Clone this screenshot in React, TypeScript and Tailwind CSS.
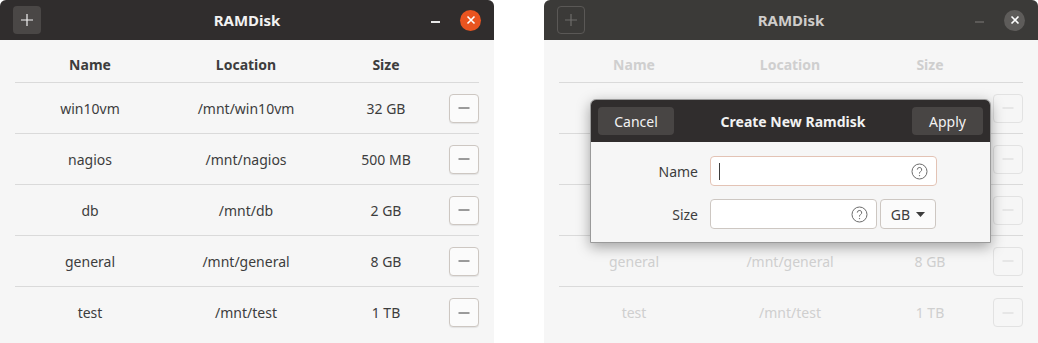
import React from "react";

const rows = [
  { name: "win10vm", loc: "/mnt/win10vm", size: "32 GB" },
  { name: "nagios", loc: "/mnt/nagios", size: "500 MB" },
  { name: "db", loc: "/mnt/db", size: "2 GB" },
  { name: "general", loc: "/mnt/general", size: "8 GB" },
  { name: "test", loc: "/mnt/test", size: "1 TB" },
];

function Help() {
  return (
    <svg width="17" height="17" viewBox="0 0 17 17" className="shrink-0">
      <circle cx="8.5" cy="8.5" r="7.5" fill="none" stroke="#6b6b6b" strokeWidth="1" />
      <path d="M6.3 6.6a2.2 2.2 0 1 1 3.2 2c-.7.4-1 .8-1 1.5v.5" fill="none" stroke="#6b6b6b" strokeWidth="1" />
      <circle cx="8.5" cy="12.6" r="0.7" fill="#6b6b6b" />
    </svg>
  );
}

function Window({ faded }: { faded: boolean }) {
  const text = faded ? "text-[#cfcfcf]" : "text-[#3d3d3d]";
  return (
    <div className="relative w-[494px] h-[343px] flex flex-col rounded-t-[6px] overflow-hidden bg-[#f6f6f6]">
      <div className={`h-[40px] grid grid-cols-[1fr_auto_1fr] items-center px-[13px] shrink-0 ${faded ? "bg-[#3b3a38]" : "bg-[#302d2d]"}`}>
        <div className="flex">
          <div className={`w-[28px] h-[28px] rounded-[4px] flex items-center justify-center ${faded ? "border border-[#5a5856] bg-[#3b3a38]" : "bg-[#4a4746]"}`}>
            <svg width="14" height="14" viewBox="0 0 14 14">
              <path d="M7 1v12M1 7h12" stroke={faded ? "#6f6d6b" : "#f2f2f2"} strokeWidth="1.2" />
            </svg>
          </div>
        </div>
        <div className={`text-center font-bold text-[15px] ${faded ? "text-[#cfcdcb]" : "text-[#f2f2f2]"}`}>RAMDisk</div>
        <div className="flex items-center justify-end">
          <div className="w-[28px] flex justify-center mr-[11px] mt-[4px]">
            <div className={`w-[9px] h-[1.5px] ${faded ? "bg-[#5c5a58]" : "bg-[#e8e8e8]"}`} />
          </div>
          <div className={`w-[21px] h-[21px] rounded-full flex items-center justify-center ${faded ? "bg-[#5e5c5a]" : "bg-[#e95420]"}`}>
            <svg width="10" height="10" viewBox="0 0 10 10">
              <path d="M1.5 1.5l7 7M8.5 1.5l-7 7" stroke="#ffffff" strokeWidth="1.6" />
            </svg>
          </div>
        </div>
      </div>
      <div className={`flex-1 px-[15px] ${text} text-[14px]`}>
        <div className="flex items-center h-[43px] pt-[7px] border-b border-[#dadada] font-bold">
          <div className="w-[150px] text-center">Name</div>
          <div className="w-[162px] text-center">Location</div>
          <div className="w-[118px] text-center">Size</div>
        </div>
        {rows.map((r, i) => (
          <div key={r.name} className={`flex items-center h-[51px] ${i < rows.length - 1 ? "border-b border-[#dadada]" : ""}`}>
            <div className="w-[150px] text-center">{r.name}</div>
            <div className="w-[162px] text-center">{r.loc}</div>
            <div className="w-[118px] text-center">{r.size}</div>
            <div className="flex-1 flex justify-end">
              <div className={`w-[30px] h-[29px] rounded-[4px] border flex items-center justify-center ${faded ? "border-[#e2e2e2] bg-[#f6f6f6]" : "border-[#cdc7c2] bg-[#fbfbfb] shadow-[0_1px_1px_rgba(0,0,0,0.08)]"}`}>
                <svg width="12" height="2" viewBox="0 0 12 2">
                  <path d="M0.5 1h11" stroke={faded ? "#d6d6d6" : "#3a3a3a"} strokeWidth="1" />
                </svg>
              </div>
            </div>
          </div>
        ))}
      </div>
      {faded && (
        <div className="absolute left-[46px] top-[99px] w-[401px] h-[144px] flex flex-col rounded-t-[6px] overflow-hidden border border-[#9a9a9a] bg-[#f6f6f6] shadow-[0_4px_14px_rgba(0,0,0,0.35)]">
          <div className="h-[42px] bg-[#302d2d] flex items-center px-[7px] shrink-0">
            <div className="w-[76px] h-[28px] rounded-[4px] bg-[#484544] text-[#f2f2f2] text-[14px] flex items-center justify-center">Cancel</div>
            <div className="flex-1 text-center font-bold text-[14px] text-[#f2f2f2]">Create New Ramdisk</div>
            <div className="w-[71px] h-[28px] rounded-[4px] bg-[#484544] text-[#f2f2f2] text-[14px] flex items-center justify-center">Apply</div>
          </div>
          <div className="flex-1 flex flex-col gap-[13px] pt-[14px] text-[14px] text-[#3d3d3d]">
            <div className="flex items-center">
              <div className="w-[119px] text-right pr-[12px]">Name</div>
              <div className="w-[227px] h-[30px] rounded-[4px] border border-[#e3c3b5] bg-white flex items-center px-[8px] justify-between">
                <div className="w-[1px] h-[17px] bg-[#3d3d3d]" />
                <Help />
              </div>
            </div>
            <div className="flex items-center">
              <div className="w-[119px] text-right pr-[12px]">Size</div>
              <div className="w-[167px] h-[30px] rounded-[4px] border border-[#cdc7c2] bg-white flex items-center px-[8px] justify-end">
                <Help />
              </div>
              <div className="ml-[3px] w-[56px] h-[30px] rounded-[4px] border border-[#cdc7c2] bg-[#fbfbfb] flex items-center justify-center gap-[6px]">
                <span>GB</span>
                <svg width="9" height="5" viewBox="0 0 9 5"><path d="M0 0h9L4.5 5z" fill="#3d3d3d" /></svg>
              </div>
            </div>
          </div>
        </div>
      )}
    </div>
  );
}

export default function App() {
  return (
    <div className="w-[1038px] h-[343px] bg-white flex gap-[50px]" style={{ fontFamily: "'Noto Sans', 'Open Sans', sans-serif" }}>
      <Window faded={false} />
      <Window faded={true} />
    </div>
  );
}
